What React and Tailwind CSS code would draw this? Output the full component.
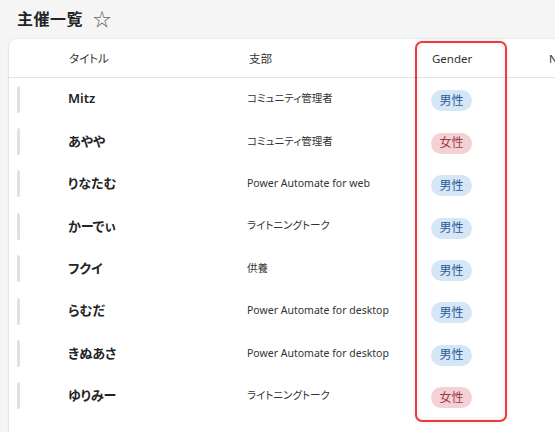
import React from 'react';

const rows = [
  { title: 'Mitz', branch: 'コミュニティ管理者', gender: 'm' },
  { title: 'あやや', branch: 'コミュニティ管理者', gender: 'f' },
  { title: 'りなたむ', branch: 'Power Automate for web', gender: 'm' },
  { title: 'かーでぃ', branch: 'ライトニングトーク', gender: 'm' },
  { title: 'フクイ', branch: '供養', gender: 'm' },
  { title: 'らむだ', branch: 'Power Automate for desktop', gender: 'm' },
  { title: 'きぬあさ', branch: 'Power Automate for desktop', gender: 'm' },
  { title: 'ゆりみー', branch: 'ライトニングトーク', gender: 'f' },
];

const GenderPill = ({ gender }) =>
  gender === 'm' ? (
    <span className="inline-flex items-center justify-center w-[41px] h-[21px] rounded-full bg-[#d5e6f6] text-[#2c5a93] text-[12px]">男性</span>
  ) : (
    <span className="inline-flex items-center justify-center w-[41px] h-[21px] rounded-full bg-[#f3d1d4] text-[#9d3a42] text-[12px]">女性</span>
  );

const cols = 'grid grid-cols-[59px_179px_184px_118px_1fr]';

export default function App() {
  return (
    <div
      className="w-[555px] h-[432px] overflow-hidden bg-[#f5f5f5] text-[#242424] [font-feature-settings:'palt']"
      style={{ fontFamily: '"Segoe UI", "Noto Sans", "Noto Sans CJK JP", sans-serif' }}
    >
      <div className="flex items-center h-[36px] pl-[17px] pt-[1px] gap-[10px]">
        <h1 className="text-[16px] font-bold tracking-[0.5px]">主催一覧</h1>
        <span className="text-[18px] text-[#616161] leading-none">☆</span>
      </div>
      <div className="relative ml-[9px] mt-[3px] w-[600px] h-[420px] bg-white rounded-[8px] shadow-[0_0_2px_rgba(0,0,0,0.12),0_1px_3px_rgba(0,0,0,0.08)]">
        <div className={`${cols} h-[39px] items-center border-b border-[#e5e5e5] text-[11.5px] text-[#333]`}>
          <div />
          <div className="pl-[1px] pt-[2px]">タイトル</div>
          <div className="pl-[2px] pt-[2px]">支部</div>
          <div className="pl-[1px] pt-[2px]">Gender</div>
          <div className="overflow-hidden whitespace-nowrap pt-[2px]">Name</div>
        </div>
        {rows.map((r) => (
          <div key={r.title} className={`${cols} h-[42.4px] items-center`}>
            <div className="pl-[8px] flex items-center">
              <div className="w-[3px] h-[27px] rounded-sm bg-[#e1e1e1]" />
            </div>
            <div className="text-[13px] font-semibold">{r.title}</div>
            <div className="text-[10.5px] text-[#333]">{r.branch}</div>
            <div>
              <GenderPill gender={r.gender} />
            </div>
            <div />
          </div>
        ))}
        <div className="absolute left-[406px] top-[2px] w-[92px] h-[381px] rounded-[7px] border-2 border-[#f03a3a] shadow-[inset_0_0_6px_rgba(0,0,0,0.08),0_0_4px_rgba(0,0,0,0.1)]" />
      </div>
    </div>
  );
}
